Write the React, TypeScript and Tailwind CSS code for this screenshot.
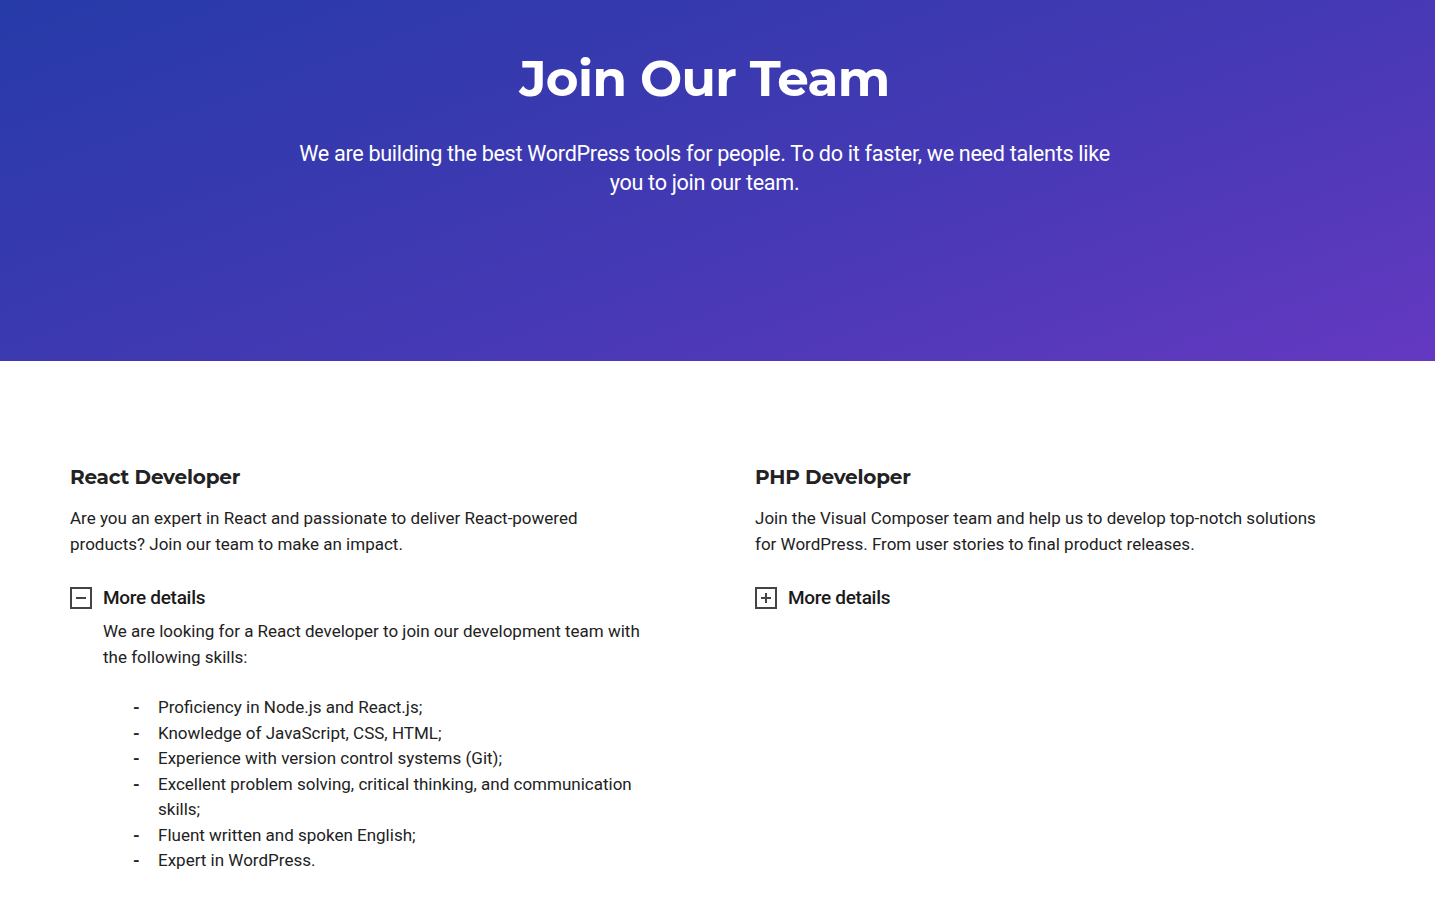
import { useState } from 'react'

interface Job {
  title: string
  summary: string
  intro: string
  skills: string[]
}

const jobs: Job[] = [
  {
    title: 'React Developer',
    summary: 'Are you an expert in React and passionate to deliver React-powered products? Join our team to make an impact.',
    intro: 'We are looking for a React developer to join our development team with the following skills:',
    skills: [
      'Proficiency in Node.js and React.js;',
      'Knowledge of JavaScript, CSS, HTML;',
      'Experience with version control systems (Git);',
      'Excellent problem solving, critical thinking, and communication skills;',
      'Fluent written and spoken English;',
      'Expert in WordPress.',
    ],
  },
  {
    title: 'PHP Developer',
    summary: 'Join the Visual Composer team and help us to develop top-notch solutions for WordPress. From user stories to final product releases.',
    intro: 'We are looking for a PHP developer to join our development team with the following skills:',
    skills: [
      'Proficiency in PHP and MySQL;',
      'Knowledge of JavaScript, CSS, HTML;',
      'Experience with version control systems (Git);',
      'Fluent written and spoken English;',
      'Expert in WordPress.',
    ],
  },
]

const heading = { fontFamily: 'Montserrat, Inter, "Open Sans", sans-serif' }

function ToggleIcon({ open }: { open: boolean }) {
  return (
    <span className="relative w-[22px] h-[22px] border-2 border-[#444] shrink-0 flex items-center justify-center">
      <span className="w-[10px] h-[2px] bg-[#444]" />
      {!open && <span className="absolute w-[2px] h-[10px] bg-[#444]" />}
    </span>
  )
}

function JobCard({ job, defaultOpen }: { job: Job; defaultOpen: boolean }) {
  const [open, setOpen] = useState(defaultOpen)
  return (
    <div>
      <h2 style={heading} className="mt-[1px] text-[20px] font-bold text-[#222] leading-[30px] tracking-[-0.2px]">{job.title}</h2>
      <p className="mt-[13px] max-w-[575px] text-[17px] leading-[26px] text-[#222]">{job.summary}</p>
      <button onClick={() => setOpen(o => !o)} className="mt-[28px] flex items-center gap-[11px] cursor-pointer">
        <ToggleIcon open={open} />
        <span className="text-[19px] font-medium text-[#1a1a1a] leading-[26px] tracking-[-0.3px]">More details</span>
      </button>
      {open && (
        <div className="pl-[33px] mt-[8px] max-w-[580px] text-[17px] leading-[25.5px] text-[#222]">
          <p>{job.intro}</p>
          <ul className="mt-[25px]">
            {job.skills.map(s => (
              <li key={s} className="flex">
                <span className="w-[55px] shrink-0 pl-[30px] font-bold">-</span>
                <span>{s}</span>
              </li>
            ))}
          </ul>
        </div>
      )}
    </div>
  )
}

export default function App() {
  return (
    <div className="min-h-screen bg-white" style={{ fontFamily: 'Roboto, "Liberation Sans", sans-serif' }}>
      <section className="h-[361px] bg-[linear-gradient(160deg,#263aa8_0%,#4439b4_55%,#6439c1_100%)] flex flex-col items-center pr-[26px] text-white">
        <h1 style={heading} className="mt-[46px] text-[50px] font-bold leading-[66px] tracking-[-0.6px]">Join Our Team</h1>
        <p className="mt-[27px] max-w-[830px] text-center text-[21.6px] leading-[29px] tracking-[-0.3px]">
          We are building the best WordPress tools for people. To do it faster, we need talents like you to join our team.
        </p>
      </section>
      <section className="grid grid-cols-[685px_1fr] pl-[70px] pt-[100px] pb-[40px]">
        {jobs.map((j, i) => (
          <JobCard key={j.title} job={j} defaultOpen={i === 0} />
        ))}
      </section>
    </div>
  )
}
